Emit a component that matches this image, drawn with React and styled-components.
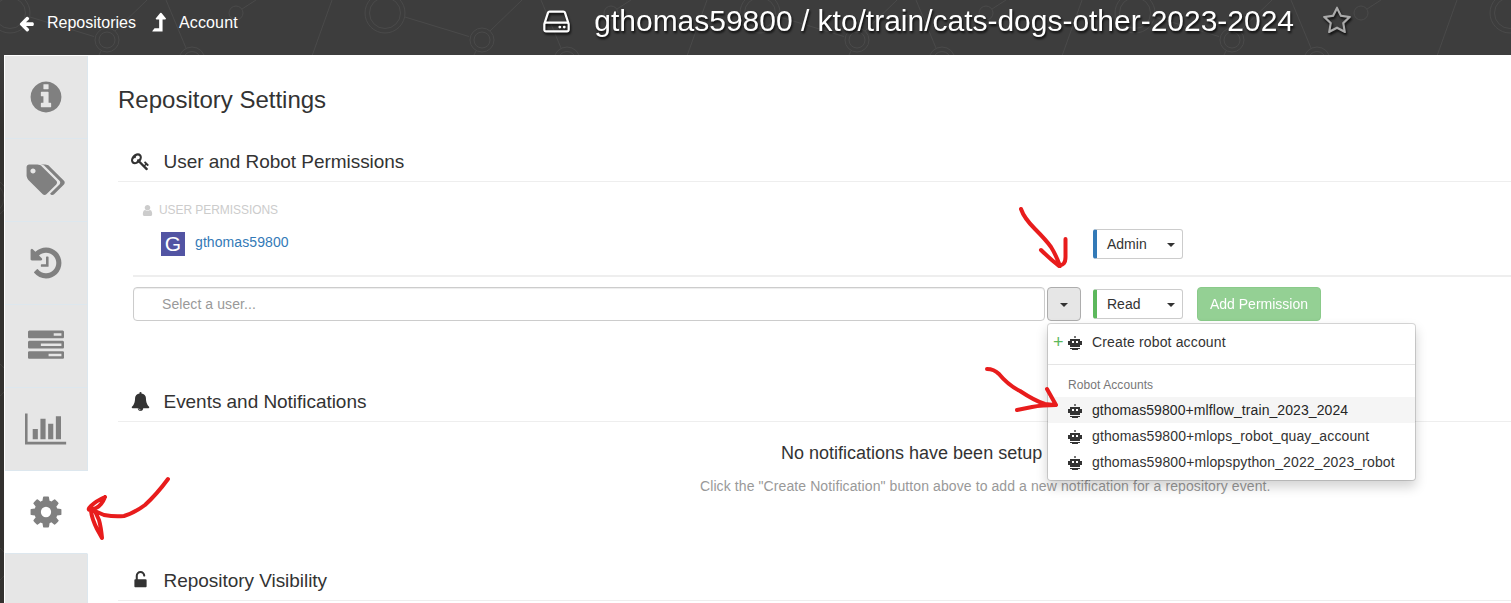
import React from "react";
import styled, { createGlobalStyle } from "styled-components";

const Global = createGlobalStyle`
  * { box-sizing: border-box; }
  html, body { margin: 0; padding: 0; }
  body { font-family: "Liberation Sans", Arial, sans-serif; font-size: 14px; color: #333; background: #3b3b3b; }
`;

const GLYPHS = {
  info: [1792, "M1152 1376v-160q0-14-9-23t-23-9h-96v-512q0-14-9-23t-23-9h-320q-14 0-23 9t-9 23v160q0 14 9 23t23 9h96v320h-96q-14 0-23 9t-9 23v160q0 14 9 23t23 9h448q14 0 23-9t9-23zm-128-896v-192q0-14-9-23t-23-9h-192q-14 0-23 9t-9 23v192q0 14 9 23t23 9h192q14 0 23-9t9-23zm640 416q0 209-103 385.5t-279.5 279.5-385.5 103-385.5-103-279.5-279.5-103-385.5 103-385.5 279.5-279.5 385.5-103 385.5 103 279.5 279.5 103 385.5z"],
  gear: [1792, "M1152 896q0-106-75-181t-181-75-181 75-75 181 75 181 181 75 181-75 75-181zm512-109v222q0 12-8 23t-20 13l-185 28q-19 54-39 91 35 50 107 138 10 12 10 25t-9 23q-27 37-99 108t-94 71q-12 0-26-9l-138-108q-44 23-91 38-16 136-29 186-7 28-36 28h-222q-14 0-24.5-8.5t-11.5-21.5l-28-184q-49-16-90-37l-141 107q-10 9-25 9-14 0-25-11-126-114-165-168-7-10-7-23 0-12 8-23 15-21 51-66.5t54-70.5q-27-50-41-99l-183-27q-13-2-21-12.5t-8-23.5v-222q0-12 8-23t19-13l186-28q14-46 39-92-40-57-107-138-10-12-10-24 0-10 9-23 26-36 98.5-107.5t94.5-71.5q13 0 26 10l138 107q44-23 91-38 16-136 29-186 7-28 36-28h222q14 0 24.5 8.5t11.5 21.5l28 184q49 16 90 37l142-107q9-9 24-9 13 0 25 10 129 119 165 170 7 8 7 22 0 12-8 23-15 21-51 66.5t-54 70.5q26 50 41 98l183 28q13 2 21 12.5t8 23.5z"],
  history: [1792, "M1664 896q0 156-61 298t-164 245-245 164-298 61q-172 0-327-72.5t-264-204.5q-7-10-6.5-22.5t8.5-20.5l137-138q10-9 25-9 16 2 23 12 73 95 179 147t225 52q104 0 198.5-40.5t163.5-109.5 109.5-163.5 40.5-198.5-40.5-198.5-109.5-163.5-163.5-109.5-198.5-40.5q-98 0-188 35.5t-160 101.5l137 138q31 30 14 69-17 40-59 40h-448q-26 0-45-19t-19-45v-448q0-42 40-59 39-17 69 14l130 129q107-101 244.5-156.5t284.5-55.5q156 0 298 61t245 164 164 245 61 298zm-640-288v448q0 14-9 23t-23 9h-320q-14 0-23-9t-9-23v-64q0-14 9-23t23-9h224v-352q0-14 9-23t23-9h64q14 0 23 9t9 23z"],
  tasks: [1792, "M1024 1408h640v-128h-640v128zm-384-512h1024v-128h-1024v128zm640-512h384v-128h-384v128zm512 832v256q0 26-19 45t-45 19h-1664q-26 0-45-19t-19-45v-256q0-26 19-45t45-19h1664q26 0 45 19t19 45zm0-512v256q0 26-19 45t-45 19h-1664q-26 0-45-19t-19-45v-256q0-26 19-45t45-19h1664q26 0 45 19t19 45zm0-512v256q0 26-19 45t-45 19h-1664q-26 0-45-19t-19-45v-256q0-26 19-45t45-19h1664q26 0 45 19t19 45z"],
  tags: [2048, "M576 448q0-53-37.5-90.5t-90.5-37.5-90.5 37.5-37.5 90.5 37.5 90.5 90.5 37.5 90.5-37.5 37.5-90.5zm1067 576q0 53-37 90l-491 492q-39 37-91 37-53 0-90-37l-715-716q-38-37-64.5-101t-26.5-117v-416q0-52 38-90t90-38h416q53 0 117 26.5t102 64.5l715 714q37 39 37 91zm384 0q0 53-37 90l-491 492q-39 37-91 37-36 0-59-14t-53-45l470-470q37-37 37-90 0-52-37-91l-715-714q-38-38-102-64.5t-117-26.5h224q53 0 117 26.5t102 64.5l715 714q37 39 37 91z"],
  chart: [2048, "M640 896v512h-256v-512h256zm384-512v1024h-256v-1024h256zm1024 1152v128h-2048v-1536h128v1408h1920zm-640-896v768h-256v-768h256zm384-384v1152h-256v-1152h256z"],
  key: [1792, "M832 512q0-80-56-136t-136-56-136 56-56 136q0 42 19 83-41-19-83-19-80 0-136 56t-56 136 56 136 136 56 136-56 56-136q0-42-19-83 41 19 83 19 80 0 136-56t56-136zm851 704q0 17-49 66t-66 49q-9 0-28.5-16t-36.5-33-38.5-40-24.5-26l-96 96 220 220q28 28 28 68 0 42-39 81t-81 39q-40 0-68-28l-671-671q-176 131-365 131-163 0-265.5-102.5t-102.5-265.5q0-160 95-313t248-248 313-95q163 0 265.5 102.5t102.5 265.5q0 189-131 365l355 355 96-96q-3-3-26-24.5t-40-38.5-33-36.5-16-28.5q0-17 49-66t66-49q13 0 23 10 6 6 46 44.5t82 79.5 86.5 86 73 78 28.5 41z"],
  bell: [1792, "M912 1696q0-16-16-16-59 0-101.5-42.5t-42.5-101.5q0-16-16-16t-16 16q0 73 51.5 124.5t124.5 51.5q16 0 16-16zm816-288q0 52-38 90t-90 38h-448q0 106-75 181t-181 75-181-75-75-181h-448q-52 0-90-38t-38-90q50-42 91-88t85-119.5 74.5-158.5 50-206 19.5-260q0-152 117-282.5t307-158.5q-8-19-8-39 0-40 28-68t68-28 68 28 28 68q0 20-8 39 190 28 307 158.5t117 282.5q0 139 19.5 260t50 206 74.5 158.5 85 119.5 91 88z"],
  unlock: [1792, "M1376 768q40 0 68 28t28 68v576q0 40-28 68t-68 28h-960q-40 0-68-28t-28-68v-576q0-40 28-68t68-28h32v-320q0-185 131.5-316.5t316.5-131.5 316.5 131.5 131.5 316.5q0 26-19 45t-45 19h-64q-26 0-45-19t-19-45q0-106-75-181t-181-75-181 75-75 181v320h736z"],
  user: [1792, "M1536 1399q0 109-62.5 187t-150.5 78h-854q-88 0-150.5-78t-62.5-187q0-85 8.5-160.5t31.5-152 58.5-131 94-89 134.5-34.5q131 128 313 128t313-128q76 0 134.5 34.5t94 89 58.5 131 31.5 152 8.5 160.5zm-256-887q0 159-112.5 271.5t-271.5 112.5-271.5-112.5-112.5-271.5 112.5-271.5 271.5-112.5 271.5 112.5 112.5 271.5z"],
  hdd: [1792, "M1168 1216q0 33-23.5 56.5t-56.5 23.5-56.5-23.5-23.5-56.5 23.5-56.5 56.5-23.5 56.5 23.5 23.5 56.5zm256 0q0 33-23.5 56.5t-56.5 23.5-56.5-23.5-23.5-56.5 23.5-56.5 56.5-23.5 56.5 23.5 23.5 56.5zm112 160v-320q0-13-9.5-22.5t-22.5-9.5h-1216q-13 0-22.5 9.5t-9.5 22.5v320q0 13 9.5 22.5t22.5 9.5h1216q13 0 22.5-9.5t9.5-22.5zm-1230-480h1180l-157-482q-4-13-16-21.5t-26-8.5h-782q-14 0-26 8.5t-16 21.5zm1358 160v320q0 66-47 113t-113 47h-1216q-66 0-113-47t-47-113v-320q0-25 16-75l197-606q17-53 63-86t101-33h782q55 0 101 33t63 86l197 606q16 50 16 75z"],
  star: [1792, "M1201 1004l306-297-422-62-189-382-189 382-422 62 306 297-73 421 378-199 377 199zm527-357q0 22-26 48l-363 354 86 500q1 7 1 20 0 50-41 50-19 0-40-12l-449-236-449 236q-22 12-40 12-21 0-31.5-14.5t-10.5-35.5q0-6 2-20l86-500-364-354q-25-27-25-48 0-37 56-46l502-73 225-455q19-41 49-41t49 41l225 455 502 73q56 9 56 46z"],
  back: [1792, "M1664 896v128q0 53-32.5 90.5t-84.5 37.5h-704l293 294q38 36 38 90t-38 90l-75 76q-37 37-90 37-52 0-91-37l-651-652q-37-37-37-90 0-52 37-91l651-650q38-38 91-38 52 0 90 38l75 74q38 38 38 91t-38 91l-293 293h704q52 0 84.5 37.5t32.5 90.5z"],
  up: [1792, "M1337.500 531q-18 37-58 37h-192v864q0 14-9 23t-23 9h-704q-21 0-29-18-8-20 4-35l160-192q9-11 25-11h320v-640h-192q-40 0-58-37-17-37 9-68l320-384q18-22 49-22t49 22l320 384q27 32 9 68z"],
};

const Svg = styled.svg`
  display: block;
  flex: none;
  fill: currentColor;
`;

function Glyph({ name, size, className }) {
  const [w, d] = GLYPHS[name];
  return (
    <Svg className={className} width={(size * w) / 1792} height={size} viewBox={`0 0 ${w} 1792`}>
      <path d={d} />
    </Svg>
  );
}

const Page = styled.div`
  position: relative;
  width: 1511px;
  height: 603px;
  overflow: hidden;
  display: flex;
  flex-direction: column;
  background: linear-gradient(#3d3d3d 0, #3d3d3d 55px, #33312f 130px, #33312f 100%);
`;

const Network = styled.svg`
  position: absolute;
  inset: 0;
  fill: none;
  stroke: #4a4a4a;
  stroke-width: 1;
`;

const Header = styled.header`
  position: relative;
  display: flex;
  flex: none;
  height: 55px;
  color: #fff;
`;

const NavLink = styled.span`
  display: flex;
  align-items: center;
  height: 46px;
  font-size: 16px;
  line-height: 18px;
  letter-spacing: ${(p) => p.$track || 0}px;
  white-space: nowrap;
  gap: ${(p) => p.$gap}px;
  padding-left: ${(p) => p.$left}px;
`;

const UpGlyph = styled(Glyph)`
  margin-top: 2px;
`;

const TitleBar = styled.div`
  display: flex;
  align-items: center;
  height: 42px;
  margin-left: auto;
  margin-right: 159px;
  filter: drop-shadow(1px 2px 1px rgba(0, 0, 0, 0.8));
`;

const TitleText = styled.h1`
  margin: 0 28px 0 22px;
  font-size: 30px;
  line-height: 40px;
  font-weight: 400;
  letter-spacing: -0.015px;
  white-space: nowrap;
`;

const Star = styled(Glyph)`
  color: #aaa;
`;

const Body = styled.div`
  position: relative;
  flex: 1;
  display: flex;
  margin-left: 4px;
  background: #fff;
`;

const Sidebar = styled.nav`
  width: 84px;
  flex: none;
  display: flex;
  flex-direction: column;
  padding: 1px 0 0 1px;
`;

const Tab = styled.div`
  height: 83px;
  flex: none;
  display: flex;
  align-items: center;
  justify-content: center;
  color: #808080;
  background: ${(p) => (p.$active ? "#fff" : "#e6e6e6")};
  border-bottom: 1px solid #dde7ee;
  border-right: 1px solid ${(p) => (p.$active ? "#fff" : "#dde7ee")};
`;

const TabRest = styled(Tab)`
  height: auto;
  flex: 1;
  border-bottom: 0;
`;

const Content = styled.main`
  flex: 1;
  padding-left: 30px;
`;

const PageTitle = styled.h2`
  margin: 0;
  padding-top: 30px;
  font-size: 24px;
  line-height: 30px;
  font-weight: 400;
`;

const Section = styled.section`
  height: ${(p) => p.$height}px;
  padding-top: ${(p) => p.$top}px;
`;

const SectionHead = styled.h3`
  margin: 0;
  height: 40px;
  display: flex;
  align-items: center;
  gap: 14px;
  padding-left: 12.500px;
  font-size: 19px;
  font-weight: 400;
  letter-spacing: -0.04px;
  border-bottom: 1px solid #eee;
`;

const SubHead = styled.div`
  display: flex;
  align-items: center;
  gap: 5px;
  height: 16px;
  margin: 20px 0 0 23px;
  font-size: 12px;
  letter-spacing: -0.06px;
  color: #ccc;
`;

const UserRow = styled.div`
  display: flex;
  align-items: center;
  height: 30px;
  margin: 11px 0 0 43px;
`;

const Avatar = styled.span`
  width: 24px;
  height: 24px;
  margin-right: 10px;
  background: #5254a3;
  color: #fff;
  font-size: 21px;
  line-height: 24px;
  text-align: center;
`;

const UserName = styled.a`
  width: 898px;
  padding-bottom: 4px;
  letter-spacing: 0.09px;
  color: #337ab7;
`;

const Divider = styled.div`
  height: 2px;
  margin: 16px 0 10px 15px;
  background: #eee;
`;

const AddRow = styled.div`
  display: flex;
  align-items: center;
  margin-left: 15px;
`;

const Input = styled.div`
  width: 912px;
  height: 34px;
  padding-left: 28px;
  line-height: 32px;
  letter-spacing: 0.08px;
  border: 1px solid #ccc;
  border-radius: 4px;
  box-shadow: inset 0 1px 1px rgba(0, 0, 0, 0.075);
  color: #999;
`;

const Caret = styled.span`
  border: 4px solid transparent;
  border-top-color: #333;
  border-bottom: 0;
`;

const Toggle = styled.button`
  width: 34px;
  height: 34px;
  margin: 0 12px 0 2px;
  padding: 1px 0 0;
  display: flex;
  align-items: center;
  justify-content: center;
  background: #e6e6e6;
  border: 1px solid #adadad;
  border-radius: 4px;
`;

const RoleButton = styled.button`
  width: 90px;
  height: 30px;
  padding: 0 7px 0 10px;
  display: flex;
  align-items: center;
  justify-content: space-between;
  font: 14px "Liberation Sans", Arial, sans-serif;
  color: #333;
  background: #fff;
  border: 1px solid #ccc;
  border-left: 4px solid ${(p) => p.$tone};
  border-radius: 3px;

  ${Caret} {
    margin-top: 1px;
  }
`;

const AddButton = styled.button`
  width: 124px;
  height: 34px;
  margin-left: 14px;
  padding: 0;
  font: 14px "Liberation Sans", Arial, sans-serif;
  color: #fff;
  background: #5cb85c;
  border: 1px solid #4cae4c;
  border-radius: 4px;
  opacity: 0.65;
`;

const EmptyTitle = styled.div`
  padding: 19px 0 0 663px;
  font-size: 18px;
  line-height: 24px;
  white-space: nowrap;
`;

const EmptyNote = styled.div`
  margin-top: 11px;
  padding-left: 582px;
  line-height: 20px;
  letter-spacing: 0.094px;
  white-space: nowrap;
  color: #999;
`;

const Menu = styled.div`
  position: absolute;
  left: 1047px;
  top: 323px;
  width: 369px;
  height: 158px;
  padding: 5px 0;
  background: #fff;
  border: 1px solid #ccc;
  border: 1px solid rgba(0, 0, 0, 0.15);
  border-radius: 4px;
  box-shadow: 0 6px 12px rgba(0, 0, 0, 0.175);
  background-clip: padding-box;
`;

const MenuItem = styled.div`
  display: flex;
  align-items: center;
  height: 26px;
  padding-left: ${(p) => (p.$create ? 5 : 20)}px;
  letter-spacing: ${(p) => p.$track}px;
  color: ${(p) => (p.$active ? "#262626" : "#333")};
  background: ${(p) => (p.$active ? "#f5f5f5" : "transparent")};
  white-space: nowrap;
`;

const Plus = styled.span`
  width: 15px;
  color: #5cb85c;
  font-size: 18px;
  line-height: 20px;
`;

const MenuRule = styled.div`
  height: 1px;
  margin: 9px 0;
  background: #e5e5e5;
`;

const MenuLabel = styled.div`
  padding-left: 20px;
  height: 23px;
  line-height: 23px;
  font-size: 12px;
  letter-spacing: 0.08px;
  color: #777;
`;

const RobotSvg = styled.svg`
  margin: 2px 10px 0 0;
  flex: none;
`;

function Robot() {
  return (
    <RobotSvg width="14" height="14" viewBox="0 0 14 14" fill="#333" shapeRendering="crispEdges">
      <path fill="#777" d="M6 0h2v2H6z" />
      <path d="M2 3h10v2h2v4h-2v2H2V9H0V5h2zM2 12h10v1h-2v1H4v-1H2z" />
      <path fill="#fff" d="M4 5h2v2H4zM8 5h2v2H8z" />
    </RobotSvg>
  );
}

const Marks = styled.svg`
  position: absolute;
  inset: 0;
  fill: none;
  stroke: #e81c1c;
  stroke-width: 4;
  stroke-linecap: round;
  stroke-linejoin: round;
`;

const TABS = [
  ["info", 0],
  ["tags", -2],
  ["history", 0],
  ["tasks", 0],
  ["chart", 0],
  ["gear", 0],
];

const ROBOTS = [
  ["gthomas59800+mlflow_train_2023_2024", 0.08],
  ["gthomas59800+mlops_robot_quay_account", 0.12],
  ["gthomas59800+mlopspython_2022_2023_robot", 0.125],
];

const TabGlyph = styled(Glyph)`
  margin-left: ${(p) => p.$shift}px;
`;

function Backdrop() {
  return (
    <Network width="1511" height="603">
      <defs>
        <g id="net">
          <circle cx="10" cy="13" r="20" />
          <circle cx="10" cy="13" r="15.500" />
          <circle cx="107" cy="40" r="12" />
          <circle cx="107" cy="40" r="8" />
          <circle cx="236" cy="13" r="7" />
          <circle cx="192" cy="60" r="13" />
          <circle cx="192" cy="60" r="8.500" />
          <path d="M30 17l64 19.500M115 31l32-31M242 9l14-9M166 0l20 48M332 0l-20 56M101 51l-3 6" />
        </g>
      </defs>
      {[0, 375, 750, 1125, 1500].map((x) => (
        <use key={x} href="#net" x={x} />
      ))}
      <g stroke="#413f3d">
        <circle cx="-12" cy="198" r="20" />
        <circle cx="-12" cy="198" r="16" />
        <circle cx="-12" cy="380" r="20" />
        <circle cx="-12" cy="564" r="20" />
      </g>
    </Network>
  );
}

export default function App() {
  return (
    <Page>
      <Global />
      <Backdrop />
      <Header>
        <NavLink $left={18} $gap={12}>
          <Glyph name="back" size={17} />
          Repositories
        </NavLink>
        <NavLink $left={12} $gap={7} $track={0.15}>
          <UpGlyph name="up" size={24} />
          Account
        </NavLink>
        <TitleBar>
          <Glyph name="hdd" size={31} />
          <TitleText>gthomas59800 / kto/train/cats-dogs-other-2023-2024</TitleText>
          <Star name="star" size={30} />
        </TitleBar>
      </Header>
      <Body>
        <Sidebar>
          {TABS.map(([name, shift]) => (
            <Tab key={name} $active={name === "gear"}>
              <TabGlyph name={name} size={36} $shift={shift} />
            </Tab>
          ))}
          <TabRest />
        </Sidebar>
        <Content>
          <PageTitle>Repository Settings</PageTitle>
          <Section $height={241} $top={27}>
            <SectionHead>
              <Glyph name="key" size={19} />
              User and Robot Permissions
            </SectionHead>
            <SubHead>
              <Glyph name="user" size={13} />
              USER PERMISSIONS
            </SubHead>
            <UserRow>
              <Avatar>G</Avatar>
              <UserName>gthomas59800</UserName>
              <RoleButton $tone="#337ab7">
                Admin
                <Caret />
              </RoleButton>
            </UserRow>
            <Divider />
            <AddRow>
              <Input>Select a user...</Input>
              <Toggle>
                <Caret />
              </Toggle>
              <RoleButton $tone="#5cb85c">
                Read
                <Caret />
              </RoleButton>
              <AddButton>Add Permission</AddButton>
            </AddRow>
          </Section>
          <Section $height={179} $top={26}>
            <SectionHead>
              <Glyph name="bell" size={19} />
              Events and Notifications
            </SectionHead>
            <EmptyTitle>No notifications have been setup</EmptyTitle>
            <EmptyNote>Click the "Create Notification" button above to add a new notification for a repository event.</EmptyNote>
          </Section>
          <Section $height={70} $top={26}>
            <SectionHead>
              <Glyph name="unlock" size={19} />
              Repository Visibility
            </SectionHead>
          </Section>
        </Content>
      </Body>
      <Menu>
        <MenuItem $create $track={0.15}>
          <Plus>+</Plus>
          <Robot />
          Create robot account
        </MenuItem>
        <MenuRule />
        <MenuLabel>Robot Accounts</MenuLabel>
        {ROBOTS.map(([name, track], i) => (
          <MenuItem key={name} $active={i === 0} $track={track}>
            <Robot />
            {name}
          </MenuItem>
        ))}
      </Menu>
      <Marks width="1511" height="603">
        <path d="M1021 209q3 9 14 20t16 18q5 8 9 19M1041 250q8 8 18 16M1065.500 239v18q0 9-7 8" />
        <path d="M987 369q7 0 12 5 9 11 21 17 15 10 25 13l9 1M1047 389l9 16q-14 0-24 2l-15 3" />
        <path d="M168 479q-11 15-23 26-11 8-21 11-9 1-20-1l-14-6M105 497q-9 4-14 9-4 4-1 4 7-1 11-6 2-2 4-7M91 511q1 8 6 18l5 9q-1-11-3-18l-5-11" />
      </Marks>
    </Page>
  );
}
